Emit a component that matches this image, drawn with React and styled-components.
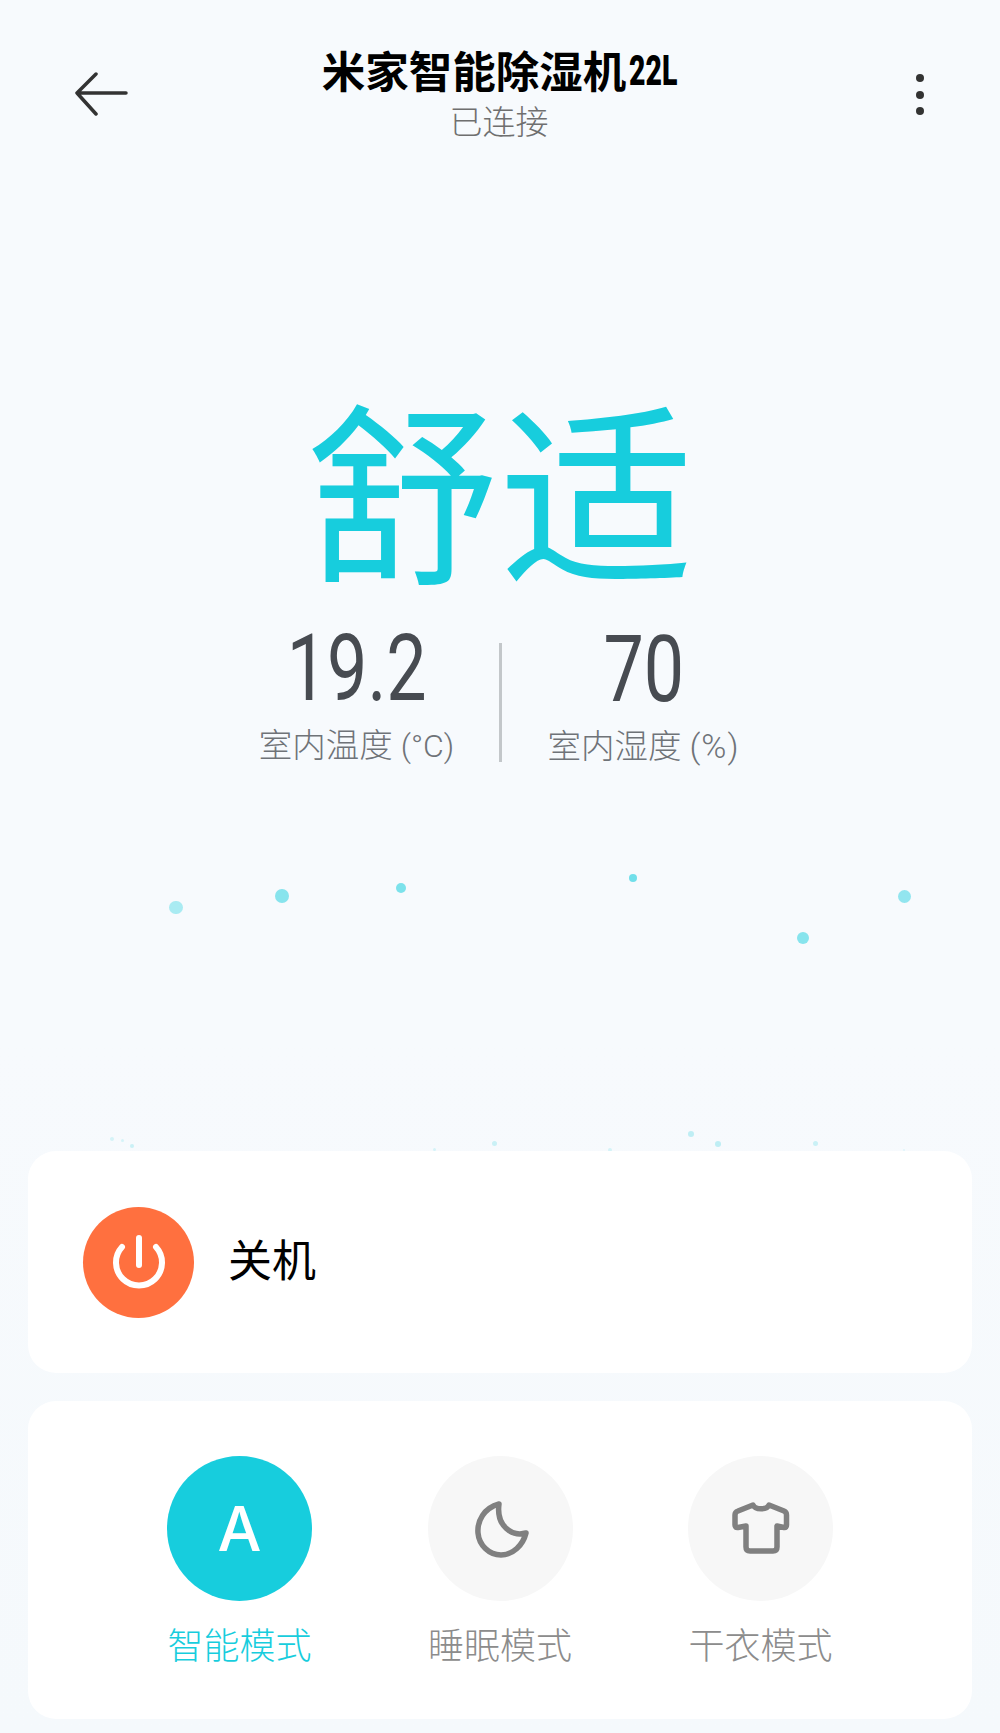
import React from 'react';
import styled, { createGlobalStyle } from 'styled-components';

const cjk = '"Noto Sans CJK SC", "Noto Sans", sans-serif';

const GlobalStyle = createGlobalStyle`
  html, body {
    margin: 0;
    padding: 0;
    background: #f7fafd;
    font-family: ${cjk};
  }
`;

const Page = styled.div`
  width: 1000px;
  height: 1733px;
  overflow: hidden;
  display: flex;
  flex-direction: column;
  background: linear-gradient(#f7fafd 60%, #f5f9fc);
`;

const Header = styled.header`
  height: 160px;
  padding: 44px 76px 0 74px;
  box-sizing: border-box;
  display: grid;
  grid-template-columns: 1fr auto 1fr;
  align-items: start;
`;

const BackBtn = styled.svg`
  width: 54px;
  height: 44px;
  margin-top: 28px;
  fill: none;
  stroke: #333;
  stroke-width: 3.5;
  stroke-linecap: round;
  stroke-linejoin: round;
`;

const TitleBox = styled.div`
  display: flex;
  flex-direction: column;
  align-items: center;
`;

const Title = styled.h1`
  margin: 0;
  font-size: 43.5px;
  line-height: 52px;
  font-weight: 700;
  color: #000;
  white-space: nowrap;
  display: flex;
  align-items: center;
`;

const Size = styled.span`
  display: inline-block;
  margin-left: 3px;
  width: 47px;
  font-family: "Roboto", sans-serif;
  font-size: 43px;
  font-weight: 900;
  transform: scaleX(0.66);
  transform-origin: left center;
`;

const Status = styled.div`
  margin-top: 2px;
  font-size: 33px;
  line-height: 44px;
  font-weight: 300;
  color: #6f6f6f;
`;

const MoreBtn = styled.div`
  justify-self: end;
  display: flex;
  flex-direction: column;
  gap: 8.5px;
  margin-top: 30px;
`;

const MoreDot = styled.span`
  width: 8px;
  height: 8px;
  border-radius: 50%;
  background: #333;
`;

const Comfort = styled.div`
  margin-top: 227px;
  height: 196px;
  text-align: center;
  font-size: 194px;
  line-height: 196px;
  font-weight: 400;
  color: #17cddd;
`;

const Stats = styled.div`
  margin-top: 34px;
  display: flex;
  justify-content: center;
  align-items: flex-end;
`;

const Stat = styled.div`
  width: 284px;
  display: flex;
  flex-direction: column;
  align-items: center;
`;

const Value = styled.div`
  font-family: "Roboto", sans-serif;
  font-size: 92px;
  line-height: 103px;
  font-weight: 400;
  color: #474b51;
  transform: scaleX(0.78);
`;

const Label = styled.div`
  font-size: 33.5px;
  line-height: 46px;
  font-weight: 300;
  color: #6f7378;
  white-space: nowrap;
`;

const Unit = styled.span`
  font-family: "Roboto", sans-serif;
  font-size: ${(p) => (p.$wide ? '34px' : '32px')};
  margin-left: 8px;
  letter-spacing: ${(p) => (p.$wide ? '1px' : '0')};
`;

const Divider = styled.div`
  width: 3px;
  height: 119px;
  background: #c3c7ca;
  margin-bottom: 7px;
`;

const Particles = styled.div`
  position: relative;
  flex: 1;
`;

const Particle = styled.span`
  position: absolute;
  left: ${(p) => p.$x - p.$r}px;
  top: ${(p) => p.$y - p.$r}px;
  width: ${(p) => p.$r * 2}px;
  height: ${(p) => p.$r * 2}px;
  border-radius: 50%;
  background: #17cddd;
  opacity: ${(p) => p.$o};
`;

const Card = styled.section`
  margin: 0 28px;
  background: #fff;
  border-radius: 28px;
  box-sizing: border-box;
  position: relative;
`;

const PowerCard = styled(Card)`
  height: 222px;
  padding: 0 55px;
  display: flex;
  align-items: center;
  gap: 34px;
`;

const PowerBtn = styled.div`
  width: 111px;
  height: 111px;
  border-radius: 50%;
  background: #ff703f;
  display: flex;
  align-items: center;
  justify-content: center;
`;

const PowerLabel = styled.div`
  font-size: 44px;
  margin-bottom: 8px;
  color: #000;
`;

const ModeCard = styled(Card)`
  margin-top: 28px;
  margin-bottom: 14px;
  height: 318px;
  padding-top: 55px;
  display: flex;
  justify-content: center;
  gap: 115.5px;
`;

const Mode = styled.div`
  width: 145px;
  display: flex;
  flex-direction: column;
  align-items: center;
`;

const ModeCircle = styled.div`
  width: 145px;
  height: 145px;
  border-radius: 50%;
  background: ${(p) => (p.$active ? '#17cddd' : '#f7f7f7')};
  color: #fff;
  display: flex;
  align-items: center;
  justify-content: center;
  font-family: "Inter", sans-serif;
  font-size: 62px;
  font-weight: 500;
`;

const ModeLabel = styled.div`
  margin-top: 16px;
  font-size: 36px;
  line-height: 52px;
  font-weight: 300;
  white-space: nowrap;
  color: ${(p) => (p.$active ? '#17cddd' : '#8c8c8c')};
`;

const ModeIcon = styled.svg`
  fill: none;
  stroke: #808080;
  stroke-width: 5.5;
  stroke-linecap: round;
  stroke-linejoin: round;
`;

const MoonIcon = styled(ModeIcon)`
  margin-left: 3px;
`;

const dots = [
  [176, 907, 6.7, 0.35],
  [281.5, 895, 7, 0.5],
  [401, 887, 5, 0.55],
  [633, 877, 4, 0.6],
  [904.5, 896, 6.5, 0.45],
  [802.5, 937, 6, 0.5],
  [112, 1138, 2, 0.15],
  [122, 1140, 1.5, 0.15],
  [132, 1145, 2, 0.2],
  [434, 1149, 1.5, 0.15],
  [494, 1143, 2.5, 0.2],
  [610, 1149, 2, 0.15],
  [691, 1133, 3, 0.25],
  [718, 1143, 3, 0.25],
  [815, 1143, 2.5, 0.2],
  [904, 1149, 1, 0.1],
];

export default function App() {
  return (
    <Page>
      <GlobalStyle />
      <Header>
        <BackBtn viewBox="0 0 54 44">
          <path d="M52 21H3M22 2L3 21l19 21" />
        </BackBtn>
        <TitleBox>
          <Title>
            米家智能除湿机<Size>22L</Size>
          </Title>
          <Status>已连接</Status>
        </TitleBox>
        <MoreBtn>
          <MoreDot />
          <MoreDot />
          <MoreDot />
        </MoreBtn>
      </Header>

      <Comfort>舒适</Comfort>

      <Stats>
        <Stat>
          <Value>19.2</Value>
          <Label>
            室内温度<Unit>(°C)</Unit>
          </Label>
        </Stat>
        <Divider />
        <Stat>
          <Value>70</Value>
          <Label>
            室内湿度<Unit $wide>(%)</Unit>
          </Label>
        </Stat>
      </Stats>

      <Particles>
        {dots.map(([x, y, r, o]) => (
          <Particle key={x} $x={x} $y={y - 768.5} $r={r} $o={o} />
        ))}
      </Particles>

      <PowerCard>
        <PowerBtn>
          <svg width="64" height="64" viewBox="0 0 64 64" fill="none" stroke="#fff" strokeWidth="6" strokeLinecap="round">
            <path d="M32 8v27" />
            <path d="M15 17a23 23 0 1 0 34 0" />
          </svg>
        </PowerBtn>
        <PowerLabel>关机</PowerLabel>
      </PowerCard>

      <ModeCard>
        <Mode>
          <ModeCircle $active>A</ModeCircle>
          <ModeLabel $active>智能模式</ModeLabel>
        </Mode>
        <Mode>
          <ModeCircle>
            <MoonIcon width="60" height="60" viewBox="0 0 60 60">
              <path d="M27 5C12 9 5 22 6 34c1 12 11 22 23 22 12 0 22-10 25-22-14 4-30-7-27-29z" />
            </MoonIcon>
          </ModeCircle>
          <ModeLabel>睡眠模式</ModeLabel>
        </Mode>
        <Mode>
          <ModeCircle>
            <ModeIcon width="62" height="58" viewBox="0 0 62 58">
              <path d="M23 5c2 5 14 5 16 0l15 6q2.500 1 2.500 4v10q0 3-2.500 2.500L47 26v21q0 4-4 4H20q-4 0-4-4V26l-8 1.500Q5 28 5 25V15q0-3 3-4z" />
            </ModeIcon>
          </ModeCircle>
          <ModeLabel>干衣模式</ModeLabel>
        </Mode>
      </ModeCard>
    </Page>
  );
}
